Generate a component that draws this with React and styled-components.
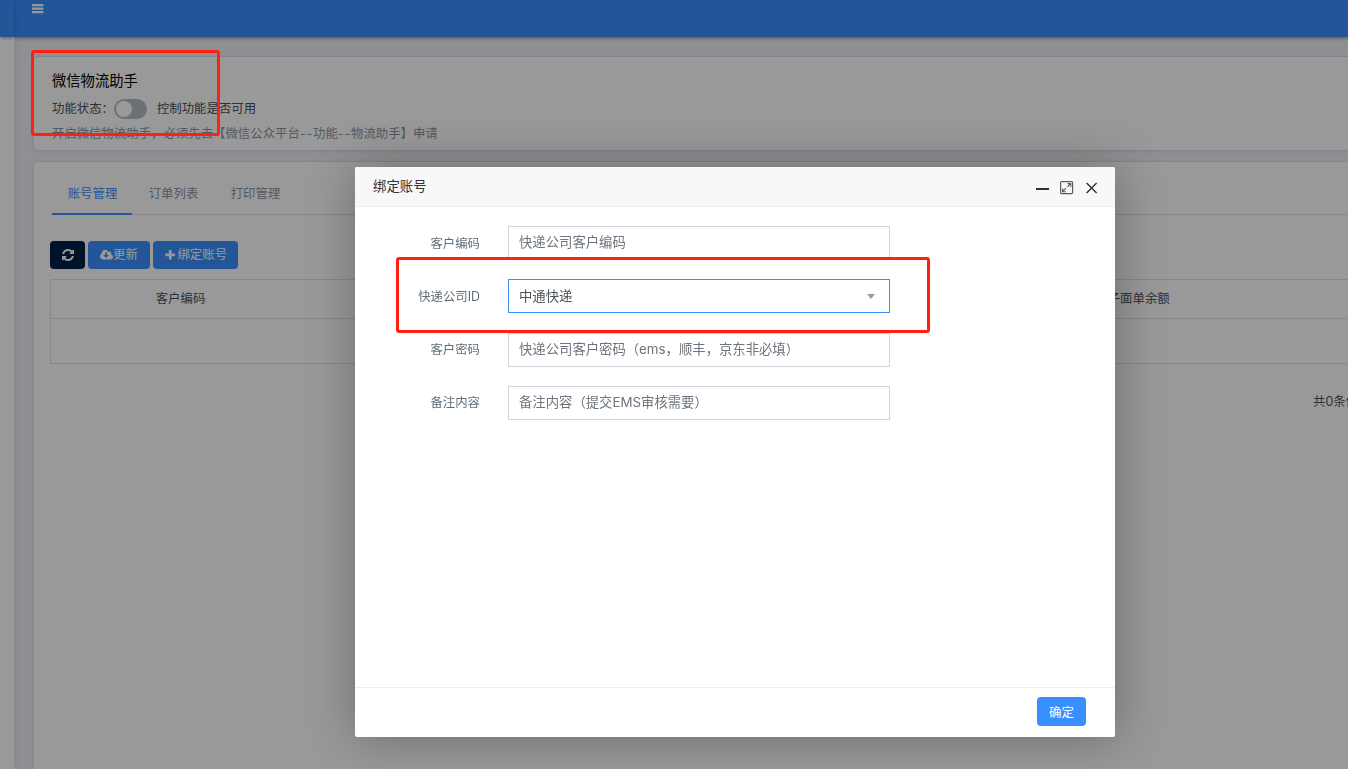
import styled, { createGlobalStyle } from "styled-components";

const columns = ["客户编码", "", "电子面单余额", ""];
const tabs = ["账号管理", "订单列表", "打印管理"];

export default function App() {
    return (
        <>
            <GlobalStyle />
            <Page>
                <Sidebar>
                    <SidebarTop />
                </Sidebar>
                <Main>
                    <TopBar>
                        <MenuIcon />
                    </TopBar>
                    <Content>
                        <StatusCard>
                            <h1>微信物流助手</h1>
                            <StatusRow>
                                <span>功能状态：</span>
                                <Switch />
                                <span>控制功能是否可用</span>
                            </StatusRow>
                            <Tip>
                                开启微信物流助手，必须先去【微信公众平台<Dash>--</Dash>功能<Dash>--</Dash>物流助手】申请
                            </Tip>
                        </StatusCard>
                        <ListCard>
                            <Tabs>
                                {tabs.map((tab, i) => (
                                    <Tab key={tab} $active={i === 0}>{tab}</Tab>
                                ))}
                            </Tabs>
                            <Toolbar>
                                <ToolButton $dark><RefreshIcon /></ToolButton>
                                <ToolButton $wide="62px"><CloudIcon />更新</ToolButton>
                                <ToolButton $wide="85px"><PlusIcon />绑定账号</ToolButton>
                            </Toolbar>
                            <Table>
                                <TableHead>
                                    {columns.map((name, i) => (
                                        <span key={i}>{name}</span>
                                    ))}
                                </TableHead>
                                <TableEmpty />
                            </Table>
                            <Total>共0条件</Total>
                        </ListCard>
                    </Content>
                </Main>
            </Page>
            <Shade />
            <Modal>
                <ModalHeader>
                    <h2>绑定账号</h2>
                    <WindowIcons />
                </ModalHeader>
                <Form>
                    <Field>
                        <label>客户编码</label>
                        <Input placeholder="快递公司客户编码" />
                    </Field>
                    <Field>
                        <label>快递公司ID</label>
                        <Select>
                            中通快递
                            <Caret />
                        </Select>
                    </Field>
                    <Field>
                        <label>客户密码</label>
                        <Input placeholder="快递公司客户密码（ems，顺丰，京东非必填）" />
                    </Field>
                    <Field>
                        <label>备注内容</label>
                        <Input placeholder="备注内容（提交EMS审核需要）" />
                    </Field>
                </Form>
                <ModalFooter>
                    <Confirm>确定</Confirm>
                </ModalFooter>
            </Modal>
            <Mark $x={31} $y={50} $w={189} $h={86} />
            <Mark $x={396} $y={257} $w={534} $h={76} />
        </>
    )
}

function MenuIcon() {
    return (
        <svg width="12" height="10" viewBox="0 0 12 10" fill="#fff">
            <rect x="0" y="0" width="11.4" height="2.2" rx="0.4" />
            <rect x="0" y="3.5" width="11.4" height="2.2" rx="0.4" />
            <rect x="0" y="7" width="11.4" height="2.2" rx="0.4" />
        </svg>
    )
}

function RefreshIcon() {
    return (
        <svg width="14" height="14" viewBox="0 0 1792 1792" fill="currentColor">
            <path d="M1639 1056q0 5-1 7-64 268-268 434.5t-478 166.5q-146 0-282.5-55t-243.5-157l-129 129q-19 19-45 19t-45-19-19-45v-448q0-26 19-45t45-19h448q26 0 45 19t19 45-19 45l-137 137q71 66 161 102t187 36q134 0 250-65t186-179q11-17 53-117 8-23 30-23h192q13 0 22.5 9.5t9.5 22.5zm25-800v448q0 26-19 45t-45 19h-448q-26 0-45-19t-19-45 19-45l138-138q-148-137-349-137-134 0-250 65t-186 179q-11 17-53 117-8 23-30 23h-199q-13 0-22.5-9.5t-9.5-22.5v-7q65-268 270-434.5t480-166.5q146 0 284 55.5t245 156.5l130-129q19-19 45-19t45 19 19 45z" />
        </svg>
    )
}

function CloudIcon() {
    return (
        <svg width="13" height="13" viewBox="-64 64 1920 1792" fill="currentColor">
            <path d="M1216 928q0-14-9-23t-23-9h-224v-352q0-13-9.5-22.5t-22.5-9.5h-192q-13 0-22.5 9.5t-9.5 22.5v352h-224q-13 0-22.5 9.5t-9.5 22.5q0 14 9 23l352 352q9 9 23 9t23-9l351-351q10-12 10-24zm640 224q0 159-112.5 271.5t-271.5 112.5h-1088q-185 0-316.5-131.5t-131.5-316.5q0-130 70-240t188-165q-2-30-2-43 0-212 150-362t362-150q156 0 285.5 87t188.5 231q71-62 166-62 106 0 181 75t75 181q0 76-41 138 130 31 213.5 135.5t83.5 238.5z" />
        </svg>
    )
}

function PlusIcon() {
    return (
        <svg className="plus" width="12.5" height="12.5" viewBox="0 0 1792 1792" fill="currentColor">
            <path d="M1600 736v192q0 40-28 68t-68 28h-416v416q0 40-28 68t-68 28h-192q-40 0-68-28t-28-68v-416h-416q-40 0-68-28t-28-68v-192q0-40 28-68t68-28h416v-416q0-40 28-68t68-28h192q40 0 68 28t28 68v416h416q40 0 68 28t28 68z" />
        </svg>
    )
}

function WindowIcons() {
    return (
        <svg width="64" height="16" viewBox="0 0 64 16" fill="none" stroke="#2e2d3c">
            <path d="M0 9H13" strokeWidth="2" />
            <rect x="24.6" y="1.6" width="12" height="12" rx="1" strokeWidth="1.2" stroke="#5c5b68" />
            <path d="M26.6 11.6L30 8.2M31.4 6.8L34.8 3.4M31.5 3.6H34.8V6.9M26.6 8.4V11.7H29.9" strokeWidth="1.1" stroke="#5c5b68" />
            <path d="M50.6 3L60.6 13M60.6 3L50.6 13" strokeWidth="1.4" />
        </svg>
    )
}

const GlobalStyle = createGlobalStyle`
    *{
        box-sizing: border-box;
    }

    body{
        margin: 0;
        overflow: hidden;
        font-family: Inter, "Noto Sans CJK SC", sans-serif;
        font-size: 12.4px;
        font-weight: 400;
        line-height: 1.5;
        color: #4d5259;
    }

    h1, h2{
        margin: 0;
        font-weight: 400;
    }
`

const Page = styled.div`
    width: 100%;
    height: 100vh;
    display: flex;
    overflow: hidden;
    background-color: #eef1f5;
`

const Sidebar = styled.div`
    width: 14px;
    flex-shrink: 0;
    background-color: #ffffff;
    box-shadow: 0 0 12px rgba(0, 0, 0, 0.1);
    position: relative;
    z-index: 2;
`

const SidebarTop = styled.div`
    height: 37px;
    background-color: #3a8ffe;
    box-shadow: 0 2px 3px -1px rgba(0, 0, 0, 0.4);
`

const Main = styled.div`
    flex: 1;
    min-width: 0;
    display: flex;
    flex-direction: column;
`

const TopBar = styled.div`
    height: 37px;
    flex-shrink: 0;
    padding: 4px 0 0 18px;
    background-color: #3a8ffe;
    box-shadow: 0 1px 4px rgba(0, 0, 0, 0.45);

    svg{
        display: block;
    }
`

const Content = styled.div`
    flex: 1;
    width: 1500px;
    display: flex;
    flex-direction: column;
    gap: 10px;
    padding: 19px 0 0 19px;
`

const Card = styled.div`
    background-color: #ffffff;
    border: 1px solid #d9e0e7;
    border-radius: 4px;
    box-shadow: 0 1px 4px rgba(60, 80, 110, 0.1);
`

const StatusCard = styled(Card)`
    height: 95px;
    padding: 14px 18px 0;

    h1{
        font-size: 14.3px;
        line-height: 20px;
        color: #000000;
    }
`

const StatusRow = styled.div`
    height: 20px;
    margin-top: 8px;
    display: flex;
    align-items: center;
`

const Switch = styled.div`
    width: 33px;
    height: 20px;
    margin: 0 10px 0 0;
    border-radius: 10px;
    background-color: #b5bcc4;

    &::after{
        content: "";
        display: block;
        width: 16px;
        height: 16px;
        margin: 2px;
        border-radius: 50%;
        background-color: #ffffff;
    }
`

const Tip = styled.div`
    margin-top: 6px;
    line-height: 18px;
    color: #8b95a5;
    white-space: nowrap;
`

const Dash = styled.span`
    letter-spacing: 0.9px;
`

const ListCard = styled(Card)`
    flex: 1;
    padding: 12px 16px 0;
    border-bottom: none;
    border-radius: 4px 4px 0 0;
`

const Tabs = styled.div`
    height: 41px;
    display: flex;
    margin-left: 2px;
    border-bottom: 1px solid #dee2e6;
`

const Tab = styled.div`
    height: 41px;
    width: ${(props) => (props.$active ? "80px" : "82px")};
    padding-left: 1px;
    line-height: 40px;
    text-align: center;
    color: ${(props) => (props.$active ? "#3a8ffe" : "#8b95a5")};
    border-bottom: 2px solid ${(props) => (props.$active ? "#3a8ffe" : "transparent")};
`

const Toolbar = styled.div`
    display: flex;
    gap: 3px;
    margin-top: 26px;
`

const ToolButton = styled.button`
    width: ${(props) => props.$wide || "35px"};
    height: 28px;
    padding: 0;
    border: none;
    border-radius: 4px;
    display: flex;
    align-items: center;
    justify-content: center;
    font-family: inherit;
    font-size: 12.4px;
    line-height: 18px;
    color: #ffffff;
    background-color: ${(props) => (props.$dark ? "#002046" : "#3a8ffe")};

    .plus{
        margin-right: 1px;
    }
`

const Table = styled.div`
    margin-top: 10px;
    border: 1px solid #dee2e6;
`

const TableHead = styled.div`
    height: 39px;
    display: grid;
    grid-template-columns: 259px 692px 261px 1fr;
    align-items: center;
    text-align: center;
    border-bottom: 1px solid #dee2e6;
`

const TableEmpty = styled.div`
    height: 44px;
`

const Total = styled.div`
    margin: 29px 0 0 1263px;
    line-height: 18px;
    white-space: nowrap;
`

const Shade = styled.div`
    position: fixed;
    inset: 0;
    z-index: 5;
    background-color: rgba(0, 0, 0, 0.4);
`

const Modal = styled.div`
    position: absolute;
    left: 355px;
    top: 167px;
    z-index: 6;
    width: 760px;
    height: 570px;
    display: flex;
    flex-direction: column;
    background-color: #ffffff;
    border-radius: 2px;
    box-shadow: 1px 1px 50px rgba(0, 0, 0, 0.3);
`

const ModalHeader = styled.div`
    height: 40px;
    display: flex;
    justify-content: space-between;
    padding: 0 15px 0 18px;
    background-color: #f8f8f8;
    border-bottom: 1px solid #eeeeee;
    border-radius: 2px 2px 0 0;

    h2{
        font-size: 13.4px;
        line-height: 38px;
        color: #333333;
    }

    svg{
        margin-top: 13px;
    }
`

const Form = styled.div`
    flex: 1;
    display: flex;
    flex-direction: column;
    gap: 19.3px;
    padding-top: 19px;
`

const Input = styled.input`
    width: 382px;
    height: 34px;
    padding: 0 10px 3px;
    border: 1px solid #cfd3dc;
    border-radius: 0;
    font-family: inherit;
    font-size: 13.35px;
    color: #4d5259;

    &::placeholder{
        color: #6c757d;
    }
`

const Field = styled.div`
    height: 34px;
    display: flex;

    label{
        width: 125px;
        margin-right: 28px;
        line-height: 36px;
        text-align: right;
        color: #616e78;
    }

    &:nth-child(n + 3) label{
        line-height: 34px;
    }

    &:nth-child(n + 3) ${Input}{
        padding-bottom: 1px;
    }
`

const Select = styled.div`
    width: 382px;
    height: 34px;
    padding: 0 14px 0 10px;
    border: 1px solid #3a8ffe;
    display: flex;
    align-items: center;
    justify-content: space-between;
    font-size: 13.35px;
    color: #4d5259;
`

const Caret = styled.i`
    width: 0;
    height: 0;
    border-left: 3.5px solid transparent;
    border-right: 3.5px solid transparent;
    border-top: 5px solid #929da6;
    border-left-width: 4px;
    border-right-width: 4px;
`

const ModalFooter = styled.div`
    height: 50px;
    display: flex;
    justify-content: flex-end;
    padding: 9px 29px 0 0;
    border-top: 1px solid #eeeeee;
`

const Confirm = styled.button`
    width: 49px;
    height: 29px;
    padding: 0;
    border: none;
    border-radius: 4px;
    font-family: inherit;
    font-size: 12.4px;
    color: #ffffff;
    background-color: #3a8ffe;
`

// red frames drawn over everything else
const Mark = styled.div`
    position: absolute;
    left: ${(props) => props.$x}px;
    top: ${(props) => props.$y}px;
    z-index: 9;
    width: ${(props) => props.$w}px;
    height: ${(props) => props.$h}px;
    border: 3px solid #ff2011;
    border-radius: 3px;
    pointer-events: none;
`
